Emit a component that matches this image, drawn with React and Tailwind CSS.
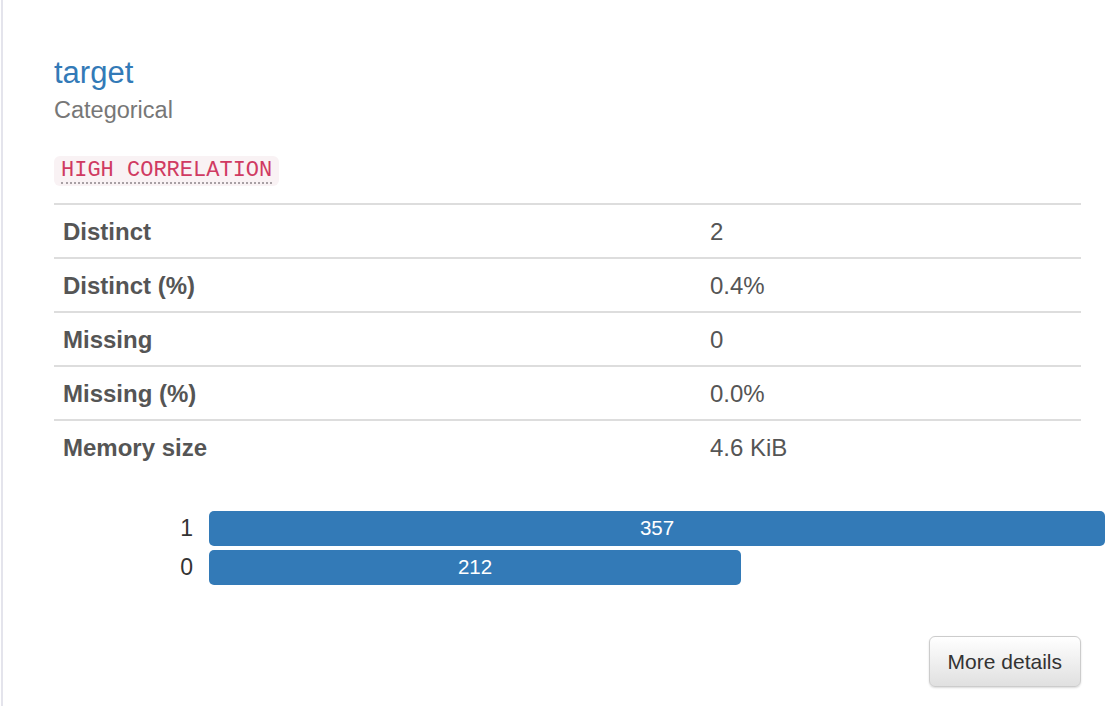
export default function App() {
  const rows = [
    ["Distinct", "2"],
    ["Distinct (%)", "0.4%"],
    ["Missing", "0"],
    ["Missing (%)", "0.0%"],
    ["Memory size", "4.6 KiB"],
  ];
  const bars = [
    { label: "1", value: 357 },
    { label: "0", value: 212 },
  ];
  const max = 357;
  return (
    <div className="w-[1120px] h-[706px] bg-white pl-px overflow-hidden" style={{ fontFamily: '"Liberation Sans", Arial, sans-serif' }}>
      <div className="h-full border-l-2 border-[#e4e4ec] pl-[51px] pt-[56px]">
        <div className="w-[1027px]">
          <div className="text-[31px] leading-[33px] text-[#337ab7]">target</div>
          <div className="mt-[9px] text-[23.5px] leading-[25px] text-[#777]">Categorical</div>
          <div className="mt-[33px] flex">
            <span className="h-[30px] rounded-[6px] bg-[#f9f2f4] px-[7px] pt-[4px] text-[22px] leading-[22px] text-[#d03a62]" style={{ fontFamily: '"Liberation Mono", "Courier New", monospace' }}>
              <span className="inline-block border-b-2 border-dotted border-[#a8a0a4] pb-[0px]">HIGH CORRELATION</span>
            </span>
          </div>
          <div className="mt-[17px]">
            {rows.map(([k, v]) => (
              <div key={k} className="flex h-[54px] border-t-2 border-[#dddddd] items-center text-[24px] leading-[33px] text-[#555]">
                <div className="w-[644px] pl-[9px] font-bold">{k}</div>
                <div className="pl-[12px]">{v}</div>
              </div>
            ))}
          </div>
        </div>
        <div className="mt-[38px] flex flex-col gap-[4px]">
          {bars.map((b) => (
            <div key={b.label} className="flex items-center">
              <div className="w-[139px] text-right text-[23px] leading-[35px] text-[#333]">{b.label}</div>
              <div className="ml-[16px] w-[896px]">
                <div
                  className="h-[35px] rounded-[5px] bg-[#337ab7] flex items-center justify-center text-[20.5px] text-white"
                  style={{ width: `${(b.value / max) * 896}px` }}
                >
                  {b.value}
                </div>
              </div>
            </div>
          ))}
        </div>
        <div className="w-[1027px] mt-[51px] flex justify-end">
          <button className="h-[51px] px-[18px] rounded-[6px] border border-[#ccc] bg-gradient-to-b from-white to-[#e0e0e0] text-[21px] text-[#333] shadow-[inset_0_1px_0_rgba(255,255,255,0.15),0_1px_2px_rgba(0,0,0,0.15)]">
            More details
          </button>
        </div>
      </div>
    </div>
  );
}
